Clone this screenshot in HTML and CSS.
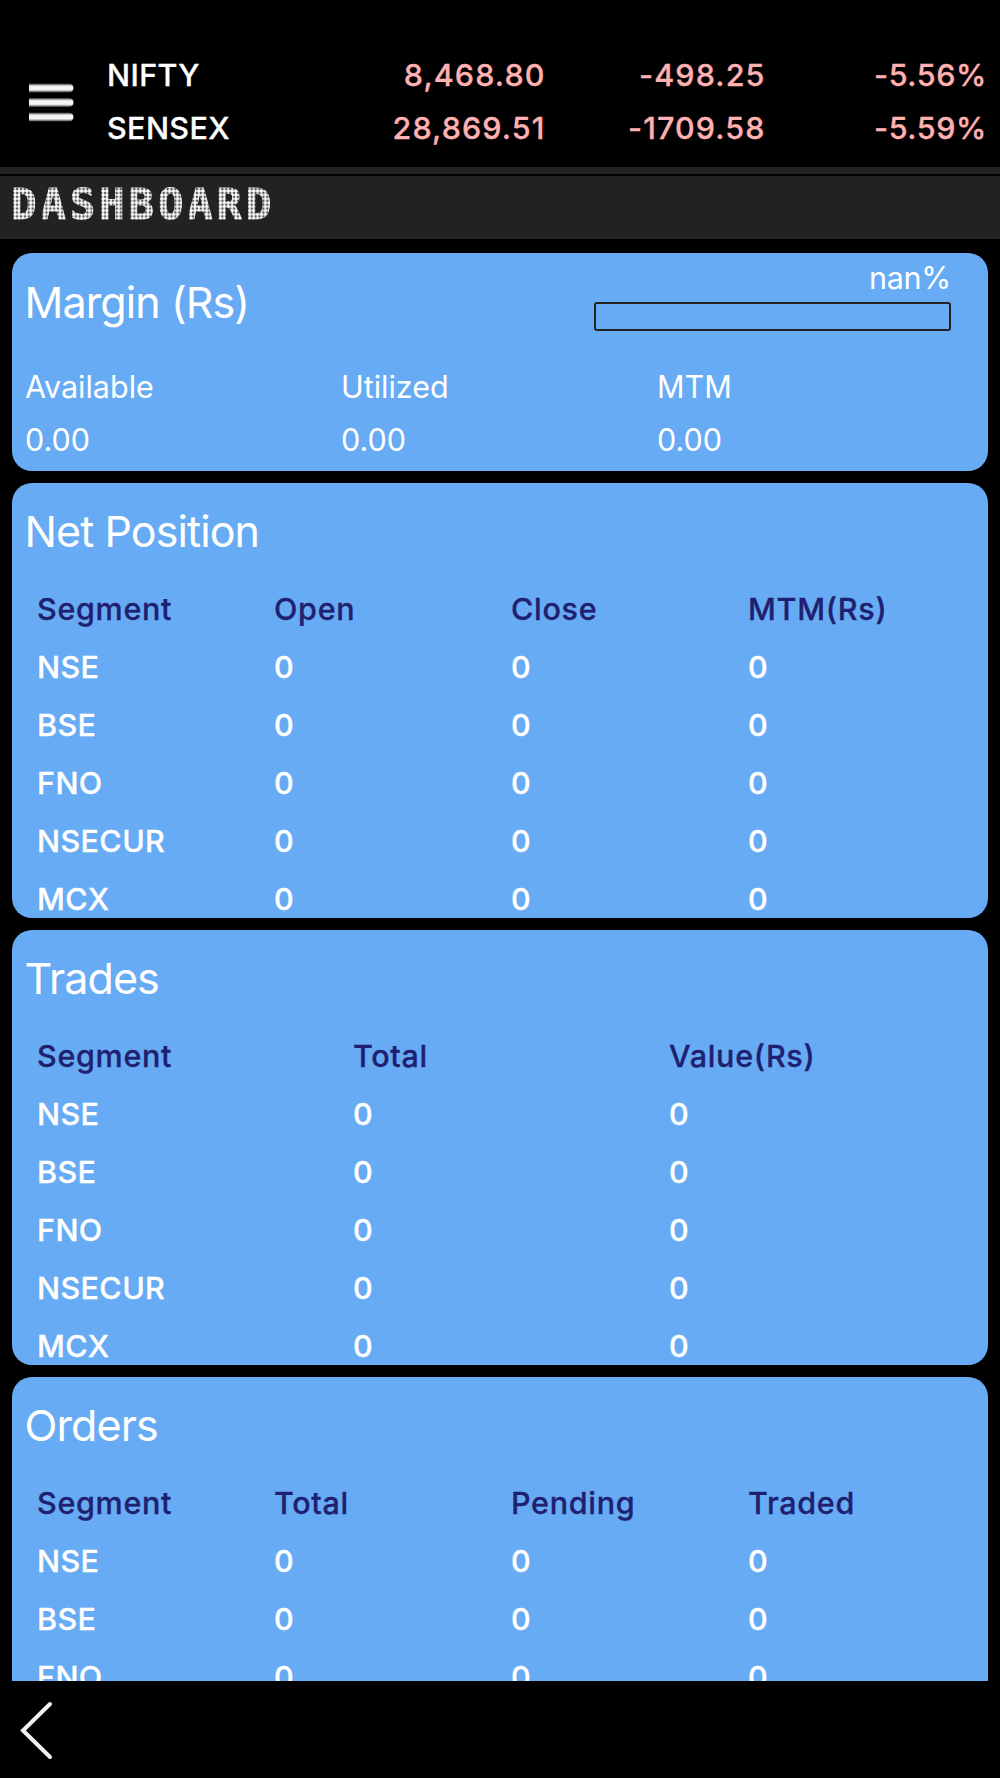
FILE: index.html
```html
<!DOCTYPE html>
<html lang="en">
<head>
  <meta charset="UTF-8">
  <meta name="viewport" content="width=device-width, initial-scale=1.0">
  <title>Dashboard</title>
  <link rel="stylesheet" href="styles.css">
</head>
<body>
  <!-- Ticker -->
  <div class="header">
    <svg class="menu-icon" width="48" height="44" viewBox="0 0 48 44">
      <defs>
        <linearGradient id="bar" x1="0" y1="0" x2="0" y2="1">
          <stop offset="0" stop-color="#fff" stop-opacity="0.2"/>
          <stop offset="0.3" stop-color="#f4f4f4"/>
          <stop offset="0.7" stop-color="#f4f4f4"/>
          <stop offset="1" stop-color="#fff" stop-opacity="0.2"/>
        </linearGradient>
      </defs>
      <path fill="url(#bar)" d="M0 3.5h40a4.5 4.5 0 0 1 0 9H0z"/>
      <path fill="url(#bar)" d="M0 18h40a4.5 4.5 0 0 1 0 9H0z"/>
      <path fill="url(#bar)" d="M0 32.5h40a4.5 4.5 0 0 1 0 9H0z"/>
    </svg>
    <div class="ticker">
      <div class="ticker-row">
        <span class="name">NIFTY</span>
        <span class="down">8,468.80</span>
        <span class="down">-498.25</span>
        <span class="down percent">-5.56%</span>
      </div>
      <div class="ticker-row">
        <span class="name">SENSEX</span>
        <span class="down">28,869.51</span>
        <span class="down">-1709.58</span>
        <span class="down percent">-5.59%</span>
      </div>
    </div>
  </div>
  <div class="title-bar">
    <h1>DASHBOARD</h1>
  </div>

  <!-- Cards -->
  <div class="content">
    <div class="card margin-card">
      <div class="card-top">
        <h2>Margin (Rs)</h2>
        <div class="usage">
          <span>nan%</span>
          <div class="progress"></div>
        </div>
      </div>
      <div class="margin-grid">
        <span>Available</span><span>Utilized</span><span>MTM</span>
        <span>0.00</span><span>0.00</span><span>0.00</span>
      </div>
    </div>

    <div class="card">
      <h2>Net Position</h2>
      <div class="table cols-4">
        <b>Segment</b><b>Open</b><b>Close</b><b>MTM(Rs)</b>
        <span>NSE</span><span>0</span><span>0</span><span>0</span>
        <span>BSE</span><span>0</span><span>0</span><span>0</span>
        <span>FNO</span><span>0</span><span>0</span><span>0</span>
        <span>NSECUR</span><span>0</span><span>0</span><span>0</span>
        <span>MCX</span><span>0</span><span>0</span><span>0</span>
      </div>
    </div>

    <div class="card">
      <h2>Trades</h2>
      <div class="table cols-3">
        <b>Segment</b><b>Total</b><b>Value(Rs)</b>
        <span>NSE</span><span>0</span><span>0</span>
        <span>BSE</span><span>0</span><span>0</span>
        <span>FNO</span><span>0</span><span>0</span>
        <span>NSECUR</span><span>0</span><span>0</span>
        <span>MCX</span><span>0</span><span>0</span>
      </div>
    </div>

    <div class="card">
      <h2>Orders</h2>
      <div class="table cols-4">
        <b>Segment</b><b>Total</b><b>Pending</b><b>Traded</b>
        <span>NSE</span><span>0</span><span>0</span><span>0</span>
        <span>BSE</span><span>0</span><span>0</span><span>0</span>
        <span>FNO</span><span>0</span><span>0</span><span>0</span>
      </div>
    </div>
  </div>

  <div class="footer">
    <svg class="back-icon" width="40" height="64" viewBox="0 0 40 64">
      <path d="M32 5 L5 31.5 L32 58" fill="none" stroke="#f2f2f2" stroke-width="4" stroke-linecap="round"/>
    </svg>
  </div>
</body>
</html>
```
FILE: styles.css
```css
* {
  box-sizing: border-box;
}
body {
  font-family: Inter, 'Liberation Sans', sans-serif;
  margin: 0;
  background-color: #000000;
  color: #ffffff;
  height: 1778px;
  display: flex;
  flex-direction: column;
  overflow: hidden;
}
.header {
  display: flex;
  height: 167px;
  padding: 48px 13px 0 29px;
  flex-shrink: 0;
}
.menu-icon {
  margin-top: 32px;
  flex-shrink: 0;
}
.ticker {
  flex: 1;
  margin-left: 30px;
}
.ticker-row {
  display: grid;
  grid-template-columns: 218.5px 220px 220px 221.5px;
  height: 53px;
  line-height: 54px;
  font-size: 30.5px;
  font-weight: 500;
  -webkit-text-stroke: 0.3px currentColor;
}
.name {
  letter-spacing: 0.4px;
}
.down {
  color: #ffb0b0;
  text-align: right;
  letter-spacing: 1.1px;
}
.percent {
  letter-spacing: 0.6px;
}
.title-bar {
  height: 72px;
  border-top: 7px solid #222222;
  box-shadow: inset 0 2px 0 #000000;
  background-color: #222222;
  padding: 0 11px;
  flex-shrink: 0;
}
/* dot matrix lettering, six dot columns per letter */
h1 {
  --dot: radial-gradient(circle at 1.95px 50%, #ffffff 1.4px, rgba(255, 255, 255, 0.25) 2.1px, rgba(255, 255, 255, 0.2) 2.4px, transparent 2.7px);
  display: inline-block;
  margin: 0;
  font-family: 'DejaVu Sans Mono', monospace;
  font-size: 42.5px;
  font-weight: bold;
  line-height: 62px;
  letter-spacing: 3.75px;
  color: transparent;
  -webkit-text-stroke: 1px transparent;
  background-image: var(--dot), var(--dot), var(--dot), var(--dot), var(--dot), var(--dot);
  background-size: 29.33px 3.91px;
  background-position: 2.2px -0.6px, 6.1px -0.6px, 10px -0.6px, 13.9px -0.6px, 17.8px -0.6px, 21.7px -0.6px;
  -webkit-background-clip: text;
  background-clip: text;
}
.content {
  height: 1442px;
  padding: 14px 12px 0;
  overflow: hidden;
  flex-shrink: 0;
}
.card {
  height: 435px;
  margin-bottom: 12px;
  padding: 0 15px 0 13px;
  border-radius: 20px;
  background-color: #67abf4;
  overflow: hidden;
}
.margin-card {
  height: 218px;
}
.card h2 {
  margin: 0;
  height: 97px;
  line-height: 97px;
  font-size: 43px;
  font-weight: 400;
  letter-spacing: -0.9px;
  text-indent: -0.5px;
}
.margin-card h2 {
  line-height: 98px;
}
.card-top {
  display: flex;
  justify-content: space-between;
}
.usage {
  width: 357px;
  margin-right: 22px;
  text-align: right;
  font-size: 30.5px;
  font-weight: 400;
  letter-spacing: -0.3px;
  line-height: 50px;
}
.usage span {
  display: block;
  height: 49px;
}
.progress {
  height: 29px;
  border: 2px solid #222222;
  border-radius: 3px;
}
.margin-grid {
  display: grid;
  grid-template-columns: repeat(3, 1fr);
  margin-top: 10px;
  line-height: 53px;
  font-size: 30.5px;
  font-weight: 400;
}
.table {
  display: grid;
  line-height: 58px;
  font-size: 30.5px;
  font-weight: 500;
  letter-spacing: 0.4px;
}
.cols-3 {
  grid-template-columns: repeat(3, 1fr);
}
.cols-4 {
  grid-template-columns: repeat(4, 1fr);
}
.table b,
.table span {
  padding-left: 12px;
  -webkit-text-stroke: 0.3px currentColor;
}
.table b {
  font-weight: 500;
  letter-spacing: 0.7px;
  color: #1f2070;
}
.footer {
  flex: 1;
  padding: 18px;
}
```
